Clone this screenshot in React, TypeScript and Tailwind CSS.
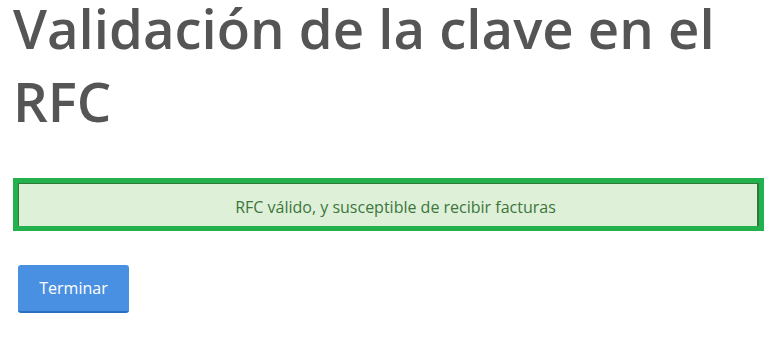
export default function App() {
  return (
    <div className="w-[780px] h-[339px] bg-white overflow-hidden" style={{ fontFamily: '"Open Sans", sans-serif' }}>
      <h1 className="-mt-[8px] ml-[13px] text-[54.5px] leading-[73px] font-semibold text-[#555555]">
        Validación de la clave en el RFC
      </h1>
      <div className="mt-[40px] ml-[13px] w-[751px] h-[53px] border-[5px] border-[#22b14c]">
        <div className="h-full pt-[3px] pl-[15px] border-t border-l border-r-2 border-[#2f7a3a] bg-[#dff0d8] flex items-center justify-center text-[16px] text-[#3c763d]">
          RFC válido, y susceptible de recibir facturas
        </div>
      </div>
      <div className="mt-[34px] ml-[18px]">
        <button className="w-[111px] h-[48px] rounded-[3px] bg-[#4a90e2] border-b-2 border-[#2a6ebd] text-white text-[16px]">
          Terminar
        </button>
      </div>
    </div>
  );
}
